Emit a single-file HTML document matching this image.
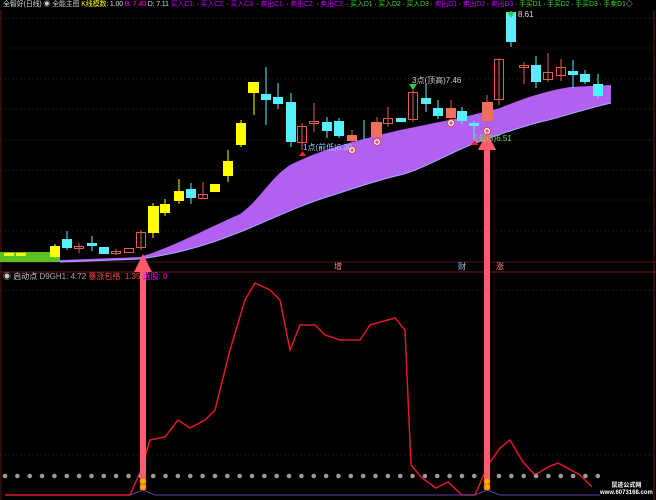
<!DOCTYPE html>
<html><head><meta charset="utf-8"><style>
html,body{margin:0;padding:0;background:#000;}
body{width:656px;height:500px;overflow:hidden;position:relative;font-family:"Liberation Sans","Noto Sans CJK SC",sans-serif;}
.t{position:absolute;font-size:8px;white-space:nowrap;line-height:10px;}
</style></head><body>
<svg width="656" height="500" style="position:absolute;left:0;top:0" xmlns="http://www.w3.org/2000/svg">
<rect width="656" height="500" fill="#000"/>
<g stroke="#2a1012" stroke-width="1" stroke-dasharray="2,2">
<line x1="0" y1="18" x2="656" y2="18"/><line x1="0" y1="48" x2="656" y2="48"/><line x1="0" y1="79" x2="656" y2="79"/><line x1="0" y1="109" x2="656" y2="109"/><line x1="0" y1="140" x2="656" y2="140"/><line x1="0" y1="170" x2="656" y2="170"/><line x1="0" y1="200" x2="656" y2="200"/><line x1="0" y1="231" x2="656" y2="231"/>
<line x1="0" y1="290" x2="656" y2="290"/><line x1="0" y1="455" x2="656" y2="455"/>
</g>
<line x1="0" y1="262" x2="656" y2="262" stroke="#4a1216"/>
<line x1="0" y1="272" x2="656" y2="272" stroke="#7a1a20"/>
<line x1="1" y1="10" x2="1" y2="500" stroke="#5a1418"/>
<line x1="654" y1="10" x2="654" y2="500" stroke="#5a1418"/>
<rect x="0" y="252" width="60" height="10" fill="#5cc020"/>
<path d="M60,260 L140,257 C170,248 200,232 240,214 C260,200 270,178 290,165 C320,150 350,142 400,130 C440,122 470,116 500,108 C520,100 540,92 570,87 L611,85 L611,103 C580,110 560,118 540,122 C510,130 490,138 470,145 C440,158 420,170 400,175 C370,182 350,190 330,196 C300,205 270,220 240,232 C200,248 170,255 140,259 L60,262 Z" fill="#b260f0"/>
<path d="M60,262 L140,259 C170,255 200,248 240,232 C270,220 300,205 330,196 C350,190 370,182 400,175 C420,170 440,158 470,145 C490,138 510,130 540,122 C560,118 580,110 611,103" fill="none" stroke="#9fb0ff" stroke-width="1"/>
<g stroke-width="1">
<rect x="4" y="253" width="10" height="3" fill="#ffff00"/><rect x="16" y="253" width="10" height="3" fill="#ffff00"/>
<line x1="55" y1="244" x2="55" y2="258" stroke="#ffff00"/><rect x="50" y="246" width="10" height="11" fill="#ffff00"/>
<line x1="67" y1="231" x2="67" y2="250" stroke="#55f0ff"/><rect x="62" y="239" width="10" height="9" fill="#55f0ff"/>
<line x1="79" y1="243" x2="79" y2="253" stroke="#e06050"/><rect x="74.5" y="246.5" width="9" height="2" fill="none" stroke="#e06050"/>
<line x1="92" y1="236" x2="92" y2="251" stroke="#55f0ff"/><rect x="87" y="243" width="10" height="3" fill="#55f0ff"/>
<rect x="99" y="247" width="10" height="7" fill="#55f0ff"/>
<line x1="116" y1="249" x2="116" y2="255" stroke="#e06050"/><rect x="111.5" y="251.5" width="9" height="2" fill="none" stroke="#e06050"/>
<rect x="124.5" y="248.5" width="9" height="4" fill="none" stroke="#e06050"/>
<line x1="141" y1="230" x2="141" y2="250" stroke="#e06050"/><rect x="136.5" y="232.5" width="9" height="15" fill="none" stroke="#e06050"/>
<line x1="153" y1="203" x2="153" y2="238" stroke="#ffff00"/><rect x="148" y="206" width="11" height="27" fill="#ffff00"/>
<line x1="165" y1="199" x2="165" y2="216" stroke="#ffff00"/><rect x="160" y="204" width="10" height="9" fill="#ffff00"/>
<line x1="179" y1="179" x2="179" y2="204" stroke="#ffff00"/><rect x="174" y="191" width="10" height="10" fill="#ffff00"/>
<line x1="191" y1="183" x2="191" y2="204" stroke="#55f0ff"/><rect x="186" y="189" width="10" height="9" fill="#55f0ff"/>
<line x1="203" y1="182" x2="203" y2="199" stroke="#e06050"/><rect x="198.5" y="194.5" width="9" height="4" fill="none" stroke="#e06050"/>
<rect x="210" y="184" width="10" height="8" fill="#ffff00"/>
<line x1="228" y1="150" x2="228" y2="182" stroke="#ffff00"/><rect x="223" y="161" width="10" height="15" fill="#ffff00"/>
<line x1="241" y1="120" x2="241" y2="147" stroke="#ffff00"/><rect x="236" y="123" width="10" height="22" fill="#ffff00"/>
<line x1="254" y1="82" x2="254" y2="115" stroke="#ffff00"/><rect x="248" y="82" width="11" height="11" fill="#ffff00"/>
<line x1="266" y1="67" x2="266" y2="125" stroke="#55f0ff"/><rect x="261" y="94" width="10" height="6" fill="#55f0ff"/>
<line x1="278" y1="83" x2="278" y2="109" stroke="#55f0ff"/><rect x="273" y="97" width="10" height="7" fill="#55f0ff"/>
<line x1="291" y1="93" x2="291" y2="147" stroke="#55f0ff"/><rect x="286" y="102" width="10" height="40" fill="#55f0ff"/>
<line x1="302" y1="123" x2="302" y2="150" stroke="#e06050"/><rect x="297.5" y="126.5" width="9" height="16" fill="none" stroke="#e06050"/>
<line x1="314" y1="103" x2="314" y2="132" stroke="#e06050"/><rect x="309.5" y="121.5" width="9" height="2" fill="none" stroke="#e06050"/>
<line x1="327" y1="117" x2="327" y2="138" stroke="#55f0ff"/><rect x="322" y="122" width="10" height="9" fill="#55f0ff"/>
<line x1="339" y1="118" x2="339" y2="138" stroke="#55f0ff"/><rect x="334" y="121" width="10" height="15" fill="#55f0ff"/>
<line x1="352" y1="130" x2="352" y2="142" stroke="#e06050"/><rect x="347" y="135" width="10" height="6" fill="#f07060"/>
<line x1="364" y1="120" x2="364" y2="140" stroke="#55f0ff"/>
<line x1="377" y1="117" x2="377" y2="138" stroke="#e06050"/><rect x="371" y="122" width="11" height="15" fill="#f07060"/>
<line x1="388" y1="107" x2="388" y2="127" stroke="#e06050"/><rect x="383.5" y="118.5" width="9" height="5" fill="none" stroke="#e06050"/>
<rect x="396" y="118" width="10" height="4" fill="#55f0ff"/>
<line x1="413" y1="90" x2="413" y2="122" stroke="#e06050"/><rect x="408.5" y="92.5" width="9" height="27" fill="none" stroke="#e06050"/>
<line x1="426" y1="84" x2="426" y2="112" stroke="#55f0ff"/><rect x="421" y="98" width="10" height="6" fill="#55f0ff"/>
<line x1="438" y1="100" x2="438" y2="119" stroke="#55f0ff"/><rect x="433" y="108" width="10" height="8" fill="#55f0ff"/>
<line x1="451" y1="100" x2="451" y2="120" stroke="#e06050"/><rect x="446" y="108" width="10" height="10" fill="#f07060"/>
<line x1="462" y1="107" x2="462" y2="124" stroke="#55f0ff"/><rect x="457" y="111" width="10" height="10" fill="#55f0ff"/>
<line x1="474" y1="121" x2="474" y2="140" stroke="#55f0ff"/><rect x="469" y="123" width="10" height="3" fill="#55f0ff"/>
<line x1="487" y1="95" x2="487" y2="125" stroke="#e06050"/><rect x="482" y="102" width="11" height="19" fill="#f07060"/>
<line x1="499" y1="58" x2="499" y2="105" stroke="#e06050"/><rect x="494.5" y="59.5" width="9" height="40" fill="none" stroke="#e06050"/>
<line x1="511" y1="11" x2="511" y2="47" stroke="#55f0ff"/><rect x="506" y="12" width="10" height="30" fill="#55f0ff"/>
<line x1="524" y1="62" x2="524" y2="84" stroke="#e06050"/><rect x="519.5" y="65.5" width="9" height="2" fill="none" stroke="#e06050"/>
<line x1="536" y1="56" x2="536" y2="88" stroke="#55f0ff"/><rect x="531" y="65" width="10" height="17" fill="#55f0ff"/>
<line x1="548" y1="53" x2="548" y2="82" stroke="#e06050"/><rect x="543.5" y="72.5" width="9" height="7" fill="none" stroke="#e06050"/>
<line x1="561" y1="59" x2="561" y2="81" stroke="#e06050"/><rect x="556.5" y="67.5" width="9" height="8" fill="none" stroke="#e06050"/>
<line x1="573" y1="60" x2="573" y2="88" stroke="#55f0ff"/><rect x="568" y="71" width="10" height="4" fill="#55f0ff"/>
<line x1="585" y1="70" x2="585" y2="84" stroke="#55f0ff"/><rect x="580" y="74" width="10" height="8" fill="#55f0ff"/>
<line x1="598" y1="74" x2="598" y2="98" stroke="#55f0ff"/><rect x="593" y="84" width="10" height="12" fill="#55f0ff"/>
</g>
<g fill="#fff" stroke="#e04050" stroke-width="1">
<circle cx="352" cy="150" r="3.5"/><circle cx="377" cy="142" r="3.5"/><circle cx="451" cy="123" r="3.5"/><circle cx="487" cy="131" r="3.5"/>
</g>
<g stroke="#e04050" stroke-width="1.2">
<path d="M350,150h4M352,148v4M375,142h4M377,140v4M449,123h4M451,121v4M485,131h4M487,129v4"/>
</g>
<path d="M409,84h8l-4,6z" fill="#30d040"/>
<path d="M507,12h8l-4,6z" fill="#30d040"/>
<path d="M299,156h7l-3.5,-5z" fill="#ff2020"/>
<path d="M471,145h7l-3.5,-5z" fill="#ff2020"/>
<polyline fill="none" stroke="#e01828" stroke-width="1.5" points="5,495 130,495 141,470 150,440 165,437 178,420 190,428 205,420 215,410 230,350 245,300 255,283 270,290 280,300 290,350 300,325 315,325 325,335 340,340 360,340 370,325 395,318 405,330 411,465 422,478 436,488 448,482 462,495 475,495 488,465 500,448 510,440 523,462 535,475 548,467 558,463 580,475 592,487"/>
<polyline fill="none" stroke="#6040a0" stroke-width="1" points="130,495 143,490 155,495 475,495 487,490 500,495 600,495"/>
<g fill="#9a9a9a" id="dots"></g>
<path d="M140,490 L140,272 L134,272 L143,254 L152,272 L146,272 L146,490 Z" fill="#ff5a6e"/>
<path d="M484,490 L484,150 L478,150 L487,132 L496,150 L490,150 L490,490 Z" fill="#ff5a6e"/>
<g fill="#ffb000" stroke="#ff6000" stroke-width="0.8"><circle cx="143" cy="481" r="3"/><circle cx="143" cy="487" r="3"/><circle cx="487" cy="481" r="3"/><circle cx="487" cy="487" r="3"/></g>
</svg>
<div class="t" style="left:3px;top:0;width:650px;overflow:hidden;color:#ddd;font-size:7px;letter-spacing:-0.15px">全智好(日线) <span style="color:#ccc">◉ 全能主图</span> <span style="color:#ff0">K线模数</span>: 1.00 <span style="color:#f0f">B: 7.40</span> D: 7.11 <span style="color:#c0f">买入C1:</span> · <span style="color:#c0f">买入C2:</span> · <span style="color:#c0f">买入C3:</span> · <span style="color:#c0f">卖出C1:</span> · <span style="color:#c0f">卖出C2:</span> · <span style="color:#c0f">卖出C3:</span> · <span style="color:#3d3">买入D1</span> · <span style="color:#3d3">买入D2</span> · <span style="color:#3d3">买入D3</span> · <span style="color:#c0f">卖出D1</span> · <span style="color:#c0f">卖出D2</span> · <span style="color:#c0f">卖出D3</span> · <span style="color:#3d3">手买D1</span> · <span style="color:#3d3">手买D2</span> · <span style="color:#3d3">手买D3</span> · <span style="color:#3d3">手卖D1</span>◇</div>
<div class="t" style="left:518px;top:10px;color:#ddd">8.61</div>
<div class="t" style="left:412px;top:76px;color:#ccc">3点(顶高)7.46</div>
<div class="t" style="left:303px;top:143px;color:#9cf">1点(前低)6.30</div>
<div class="t" style="left:474px;top:134px;color:#7d5">1低(5)6.51</div>
<div class="t" style="left:334px;top:262px;color:#f88">增</div>
<div class="t" style="left:458px;top:262px;color:#9cf">财</div>
<div class="t" style="left:496px;top:262px;color:#f88">涨</div>
<div class="t" style="left:3px;top:272px;color:#ccc">◉ 启动点 <span style="color:#aaa">D9GH1: 4.72</span> <span style="color:#f44">暴涨包络: 1.35</span> <span style="color:#f0f">选股: 0</span></div>
<div class="t" style="left:600px;top:483px;color:#fff;font-size:6px;line-height:7px;font-weight:bold;text-align:center">鼠迹公式网<br>www.6073168.com</div>
<script>
var g=document.getElementById('dots'),s='';
for(var i=0;i<49;i++){s+='<circle cx="'+(5+i*12.35)+'" cy="476" r="2.3"/>';}
g.innerHTML=s;
</script>
</body></html>
